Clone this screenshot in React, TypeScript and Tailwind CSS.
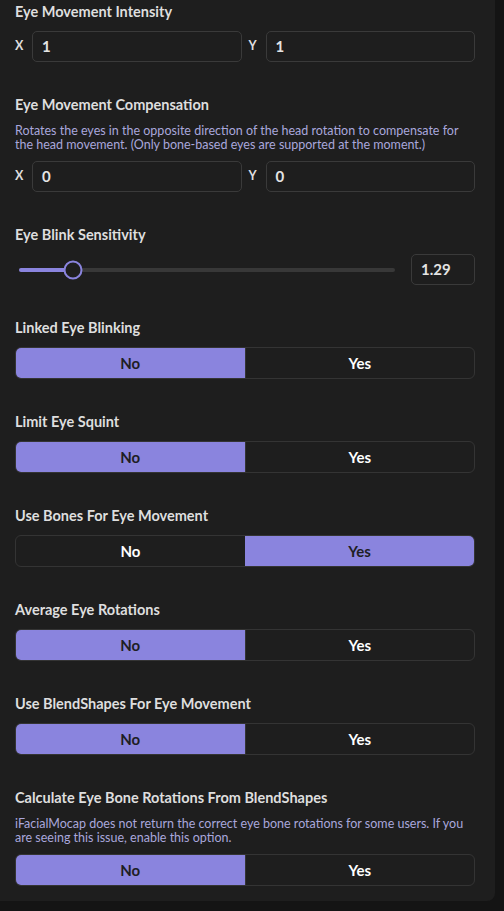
import { useState } from 'react';

const ACCENT = 'bg-[#8a84de]';

function Title({ children }: { children: string }) {
  return <div className="text-[14.5px] font-bold leading-5 text-[#dedede]">{children}</div>;
}

function Desc({ children }: { children: string }) {
  return <div className="text-[12.5px] leading-[14px] text-[#a9a7dc]">{children}</div>;
}

function NumberField({ label, value }: { label: string; value: string }) {
  return (
    <div className="flex items-center gap-[9px]">
      <span className="w-2 text-[12.5px] font-bold text-[#dedede]">{label}</span>
      <div className="flex h-[31px] flex-1 items-center rounded-[5px] border border-[#3a3a3a] bg-[#1e1e1e] px-[9px] text-[15px] font-bold text-[#e4e4e4]">
        {value}
      </div>
    </div>
  );
}

function XYRow({ x, y }: { x: string; y: string }) {
  return (
    <div className="grid grid-cols-2 gap-[7px]">
      <NumberField label="X" value={x} />
      <NumberField label="Y" value={y} />
    </div>
  );
}

function Toggle({ initial }: { initial: boolean }) {
  const [on, setOn] = useState(initial);
  const base = 'flex h-full flex-1 items-center justify-center text-[15px] font-bold';
  return (
    <div className="flex h-8 overflow-hidden rounded-[6px] border border-[#343434]">
      <button
        type="button"
        onClick={() => setOn(false)}
        className={`${base} ${!on ? `${ACCENT} text-[#1e1e24]` : 'text-white'}`}
      >
        No
      </button>
      <button
        type="button"
        onClick={() => setOn(true)}
        className={`${base} ${on ? `${ACCENT} text-[#1e1e24]` : 'border-l border-[#343434] text-white'}`}
      >
        Yes
      </button>
    </div>
  );
}

function Section({ title, desc, children }: { title: string; desc?: string; children: React.ReactNode }) {
  return (
    <div className="flex flex-col gap-[9px]">
      <Title>{title}</Title>
      {desc && <Desc>{desc}</Desc>}
      {children}
    </div>
  );
}

function BlinkSlider() {
  // 1.29 on the track, thumb sits at ~54px of 376px
  const pct = 14.4;
  return (
    <div className="flex items-center gap-4">
      <div className="relative ml-1 h-[4px] flex-1 rounded-full bg-[#383838]">
        <div className={`absolute inset-y-0 left-0 rounded-full ${ACCENT}`} style={{ width: `${pct}%` }} />
        <div
          className="absolute top-1/2 h-[19px] w-[19px] -translate-x-1/2 -translate-y-1/2 rounded-full border-2 border-[#8a84de] bg-[#1e1e1e]"
          style={{ left: `${pct}%` }}
        />
      </div>
      <div className="flex h-[31px] w-16 items-center rounded-[5px] border border-[#3a3a3a] px-[9px] text-[15px] font-bold text-[#e4e4e4]">
        1.29
      </div>
    </div>
  );
}

export default function App() {
  return (
    <div className="min-h-[911px] bg-[#141414]" style={{ fontFamily: 'Lato, "Noto Sans", sans-serif' }}>
      <div className="flex w-[495px] flex-col gap-[33px] rounded-br-[8px] bg-[#1e1e1e] pb-[15px] pl-[15px] pr-5 pt-[2px]">
        <Section title="Eye Movement Intensity">
          <XYRow x="1" y="1" />
        </Section>
        <Section
          title="Eye Movement Compensation"
          desc="Rotates the eyes in the opposite direction of the head rotation to compensate for the head movement. (Only bone-based eyes are supported at the moment.)"
        >
          <XYRow x="0" y="0" />
        </Section>
        <Section title="Eye Blink Sensitivity">
          <BlinkSlider />
        </Section>
        <Section title="Linked Eye Blinking">
          <Toggle initial={false} />
        </Section>
        <Section title="Limit Eye Squint">
          <Toggle initial={false} />
        </Section>
        <Section title="Use Bones For Eye Movement">
          <Toggle initial={true} />
        </Section>
        <Section title="Average Eye Rotations">
          <Toggle initial={false} />
        </Section>
        <Section title="Use BlendShapes For Eye Movement">
          <Toggle initial={false} />
        </Section>
        <Section
          title="Calculate Eye Bone Rotations From BlendShapes"
          desc="iFacialMocap does not return the correct eye bone rotations for some users. If you are seeing this issue, enable this option."
        >
          <Toggle initial={false} />
        </Section>
      </div>
    </div>
  );
}
